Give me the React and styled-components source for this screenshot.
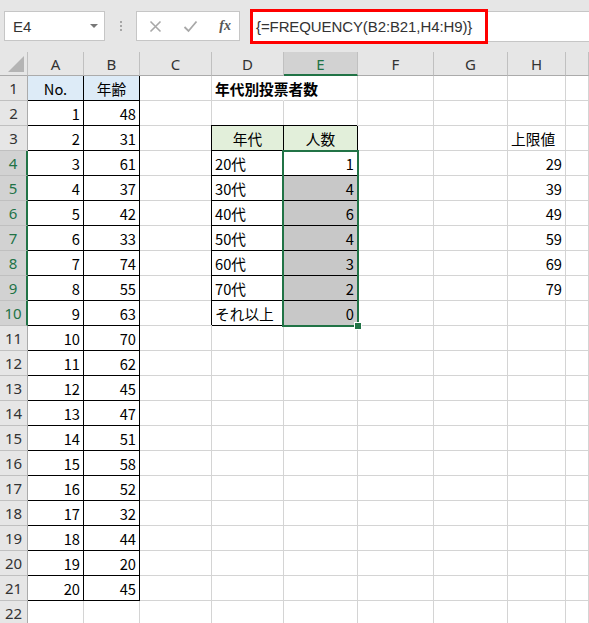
import React from "react";
import styled, { createGlobalStyle } from "styled-components";

const GREEN = "#217346";
const GRID = "#d4d4d4";

const GlobalStyle = createGlobalStyle`
  html, body {
    margin: 0;
    padding: 0;
    background: #ffffff;
    overflow: hidden;
  }
  body {
    font-family: "Noto Sans CJK JP", "Noto Sans", sans-serif;
    color: #000;
  }
`;

const Wrapper = styled.div`
  width: 589px;
  height: 623px;
  overflow: hidden;
  background: #fff;
`;

/* ---------- formula bar ---------- */
const Toolbar = styled.div`
  height: 52px;
  background: #e6e6e6;
  display: flex;
  align-items: flex-start;
  padding: 11px 0 0 4px;
  box-sizing: border-box;
`;

const NameBox = styled.div`
  width: 101px;
  height: 30px;
  box-sizing: border-box;
  background: #fff;
  border: 1px solid #c6c6c6;
  display: flex;
  align-items: center;
  justify-content: space-between;
  padding: 0 6px 0 8px;
  font-family: "Liberation Sans", Arial, sans-serif;
  font-size: 15px;
  color: #333;
`;

const DropArrow = styled.span`
  width: 0;
  height: 0;
  border-left: 4px solid transparent;
  border-right: 4px solid transparent;
  border-top: 4px solid #777;
`;

const Dots = styled.div`
  width: 31px;
  height: 30px;
  display: flex;
  flex-direction: column;
  align-items: center;
  justify-content: center;
  gap: 2px;
  span {
    width: 2px;
    height: 2px;
    background: #a6a6a6;
  }
`;

const FuncBox = styled.div`
  width: 104px;
  height: 30px;
  box-sizing: border-box;
  background: #fff;
  border: 1px solid #c6c6c6;
  display: flex;
  align-items: center;
  justify-content: space-between;
  padding: 0 8px 0 12px;
`;

const FxLabel = styled.span`
  font-family: "Liberation Serif", "Times New Roman", serif;
  font-style: italic;
  font-weight: bold;
  font-size: 14px;
  color: #555;
`;

const FormulaArea = styled.div`
  flex: 1;
  height: 31px;
  margin-left: 10px;
  background: #fff;
  border-top: 1px solid #c6c6c6;
  border-bottom: 1px solid #c6c6c6;
  box-sizing: border-box;
  position: relative;
`;

const Highlight = styled.div`
  position: absolute;
  left: 0;
  top: -3px;
  width: 238px;
  height: 35px;
  box-sizing: border-box;
  border: 3px solid #ff0000;
  display: flex;
  align-items: center;
  padding-left: 3px;
  font-family: "Liberation Sans", Arial, sans-serif;
  font-size: 15px;
  letter-spacing: -0.1px;
  color: #333;
  white-space: nowrap;
`;

/* ---------- sheet ---------- */
const Sheet = styled.div`
  display: grid;
  grid-template-columns: 28px 56px 56px 72px 72px 74px 76px 74px 58px 1fr;
  grid-template-rows: 24px repeat(22, 25px);
  position: relative;
`;

const ColHeader = styled.div`
  grid-row: 1;
  grid-column: ${(p) => p.$c};
  box-sizing: border-box;
  background: ${(p) => (p.$sel ? "#d2d2d2" : "#e6e6e6")};
  color: ${(p) => (p.$sel ? GREEN : "#333")};
  border-right: 1px solid #c0c0c0;
  border-bottom: ${(p) => (p.$sel ? `2px solid ${GREEN}` : "1px solid #ababab")};
  display: flex;
  align-items: center;
  justify-content: center;
  font-family: "Noto Sans", "Liberation Sans", sans-serif;
  font-size: 15px;
  padding-top: ${(p) => (p.$sel ? "1px" : "0")};
`;

const Corner = styled.div`
  grid-row: 1;
  grid-column: 1;
  box-sizing: border-box;
  background: #e6e6e6;
  border-right: 1px solid #c0c0c0;
  border-bottom: 1px solid #ababab;
  display: flex;
  align-items: flex-end;
  justify-content: flex-end;
  padding: 0 3px 3px 0;
  span {
    width: 0;
    height: 0;
    border-left: 16px solid transparent;
    border-bottom: 16px solid #b4b4b4;
  }
`;

const RowHeader = styled.div`
  grid-row: ${(p) => p.$r + 1};
  grid-column: 1;
  box-sizing: border-box;
  background: ${(p) => (p.$sel ? "#d2d2d2" : "#e6e6e6")};
  color: ${(p) => (p.$sel ? GREEN : "#333")};
  border-bottom: 1px solid #c0c0c0;
  border-right: ${(p) => (p.$sel ? `2px solid ${GREEN}` : "1px solid #ababab")};
  display: flex;
  align-items: center;
  justify-content: center;
  font-family: "Noto Sans", "Liberation Sans", sans-serif;
  font-size: 15px;
  position: relative;
  z-index: ${(p) => (p.$sel ? 1 : 0)};
`;

const Cell = styled.div`
  grid-row: ${(p) => p.$r + 1};
  grid-column: ${(p) => p.$c};
  box-sizing: border-box;
  background: ${(p) => p.$fill || "#fff"};
  border-right: 1px solid
    ${(p) => (p.$boxed ? "#000" : p.$spill ? "#fff" : GRID)};
  border-bottom: 1px solid ${(p) => (p.$boxed ? "#000" : GRID)};
  box-shadow: ${(p) =>
    p.$boxed ? (p.$r === 1 ? "-1px 0 0 #000" : "-1px -1px 0 #000") : "none"};
  display: flex;
  align-items: center;
  justify-content: ${(p) =>
    p.$align === "right" ? "flex-end" : p.$align === "center" ? "center" : "flex-start"};
  padding: 0 3px;
  font-size: 14.7px;
  font-weight: ${(p) => (p.$bold ? "bold" : "normal")};
  white-space: nowrap;
  overflow: visible;
  position: ${(p) => (p.$spill ? "relative" : "static")};
  z-index: ${(p) => (p.$spill ? 1 : "auto")};
`;

const Selection = styled.div`
  grid-column: 6;
  grid-row: 5 / span 7;
  margin: -1px -1px -1px -2px;
  border: 2px solid ${GREEN};
  position: relative;
  z-index: 2;
  pointer-events: none;
`;

const FillHandle = styled.span`
  position: absolute;
  right: -5px;
  bottom: -5px;
  width: 6px;
  height: 6px;
  background: ${GREEN};
  border: 1px solid #fff;
`;

const columns = ["A", "B", "C", "D", "E", "F", "G", "H", ""];
const ages = [48, 31, 61, 37, 42, 33, 74, 55, 63, 70, 62, 45, 47, 51, 58, 52, 32, 44, 20, 45];
const bands = ["20代", "30代", "40代", "50代", "60代", "70代", "それ以上"];
const counts = [1, 4, 6, 4, 3, 2, 0];
const limits = [29, 39, 49, 59, 69, 79];

function buildCells() {
  const map = {};
  const put = (r, c, props) => {
    map[`${r}-${c}`] = props;
  };
  put(1, 2, { text: "No.", align: "center", fill: "#ddebf7", boxed: true });
  put(1, 3, { text: "年齢", align: "center", fill: "#ddebf7", boxed: true });
  ages.forEach((a, i) => {
    put(i + 2, 2, { text: String(i + 1), align: "right", boxed: true });
    put(i + 2, 3, { text: String(a), align: "right", boxed: true });
  });
  // title spills over into E1, like Excel does
  put(1, 5, { text: "年代別投票者数", bold: true, spill: true });
  put(3, 5, { text: "年代", align: "center", fill: "#e2efda", boxed: true });
  put(3, 6, { text: "人数", align: "center", fill: "#e2efda", boxed: true });
  bands.forEach((b, i) => {
    put(i + 4, 5, { text: b, boxed: true });
    put(i + 4, 6, {
      text: String(counts[i]),
      align: "right",
      boxed: true,
      fill: i === 0 ? "#fff" : "#c8c8c8",
    });
  });
  put(3, 9, { text: "上限値" });
  limits.forEach((l, i) => put(i + 4, 9, { text: String(l), align: "right" }));
  return map;
}

export default function App() {
  const cells = buildCells();
  const rows = Array.from({ length: 22 }, (_, i) => i + 1);

  return (
    <Wrapper>
      <GlobalStyle />
      <Toolbar>
        <NameBox>
          E4
          <DropArrow />
        </NameBox>
        <Dots>
          <span />
          <span />
          <span />
        </Dots>
        <FuncBox>
          <svg width="13" height="13" viewBox="0 0 13 13">
            <path d="M1.5 1.5 L11.5 11.5 M11.5 1.5 L1.5 11.5" stroke="#a8a8a8" strokeWidth="1.6" />
          </svg>
          <svg width="15" height="13" viewBox="0 0 15 13">
            <path d="M1.5 7 L5.5 11 L13.5 1.5" stroke="#a8a8a8" strokeWidth="1.8" fill="none" />
          </svg>
          <FxLabel>fx</FxLabel>
        </FuncBox>
        <FormulaArea>
          <Highlight>{"{=FREQUENCY(B2:B21,H4:H9)}"}</Highlight>
        </FormulaArea>
      </Toolbar>

      <Sheet>
        <Corner>
          <span />
        </Corner>
        {columns.map((c, i) => (
          <ColHeader key={c || "x"} $c={i + 2} $sel={c === "E"}>
            {c}
          </ColHeader>
        ))}
        {rows.map((r) => (
          <React.Fragment key={r}>
            <RowHeader $r={r} $sel={r >= 4 && r <= 10}>
              {r}
            </RowHeader>
            {columns.map((_, ci) => {
              const c = ci + 2;
              const d = cells[`${r}-${c}`] || {};
              return (
                <Cell
                  key={c}
                  $r={r}
                  $c={c}
                  $align={d.align}
                  $fill={d.fill}
                  $boxed={d.boxed}
                  $bold={d.bold}
                  $spill={d.spill}
                >
                  {d.text}
                </Cell>
              );
            })}
          </React.Fragment>
        ))}
        <Selection>
          <FillHandle />
        </Selection>
      </Sheet>
    </Wrapper>
  );
}
